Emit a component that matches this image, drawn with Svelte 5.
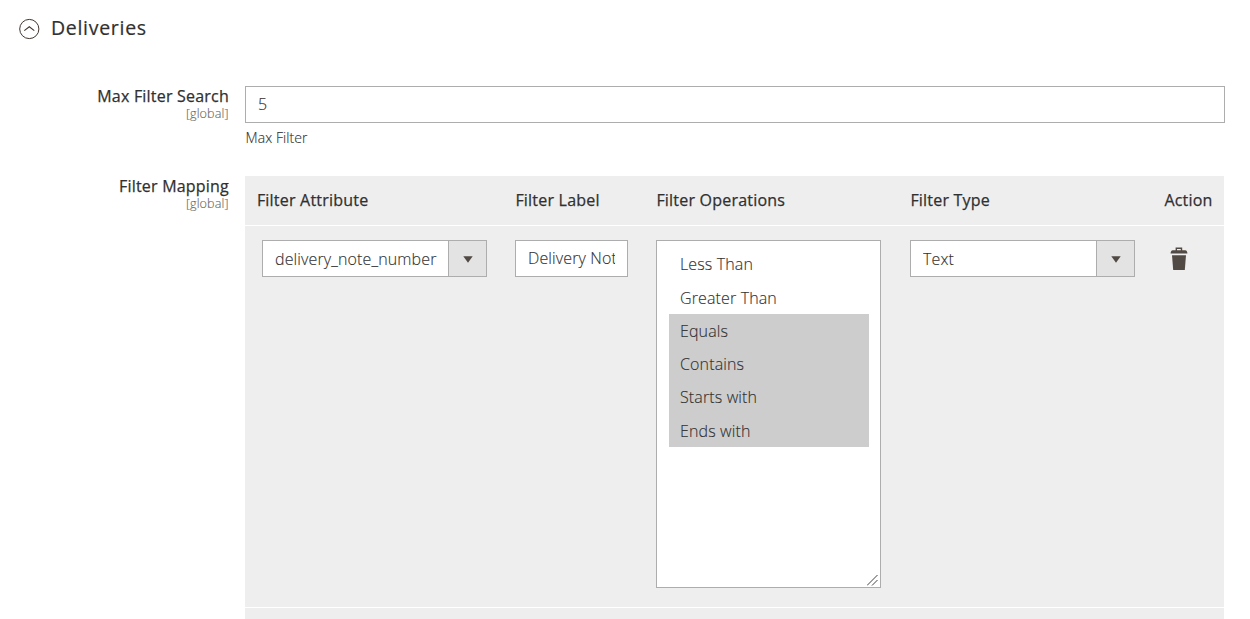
<script>
  const headers = ['Filter Attribute', 'Filter Label', 'Filter Operations', 'Filter Type', 'Action'];
  const operations = [
    { label: 'Less Than', on: false },
    { label: 'Greater Than', on: false },
    { label: 'Equals', on: true },
    { label: 'Contains', on: true },
    { label: 'Starts with', on: true },
    { label: 'Ends with', on: true }
  ];
</script>

{#snippet dropdown(value)}
  <div class="select">
    <div class="value"><span>{value}</span></div>
    <div class="arrow">
      <svg width="10" height="7" viewBox="0 0 10 7"><path d="M0.3 0.2H9.7L5 6.8Z" fill="#514943" /></svg>
    </div>
  </div>
{/snippet}

<section>
  <header>
    <svg width="22" height="22" viewBox="0 0 22 22" fill="none" stroke="#41362f">
      <circle cx="11.3" cy="11" r="9.6" stroke-width="1" />
      <path d="M6.3 12.6L11.3 8.8L16.3 12.6" stroke-width="1.1" />
    </svg>
    <h1>Deliveries</h1>
  </header>

  <div class="field first">
    <div class="label"><b>Max Filter Search</b><small>[global]</small></div>
    <div class="control">
      <div class="input wide"><span>5</span></div>
      <p>Max Filter</p>
    </div>
  </div>

  <div class="field second">
    <div class="label"><b>Filter Mapping</b><small>[global]</small></div>
    <div class="table">
      <div class="row head">
        {#each headers as title}<div>{title}</div>{/each}
      </div>
      <div class="row body">
        <div class="attr">{@render dropdown('delivery_note_number')}</div>
        <div><div class="input short"><span>Delivery Note</span></div></div>
        <div>
          <div class="multi">
            {#each operations as op}<div class="option" class:on={op.on}>{op.label}</div>{/each}
            <svg class="grip" width="11" height="11" viewBox="0 0 11 11" stroke="#444" fill="none"><path d="M0 10.5L10.5 0M5 10.5L10.5 5" /></svg>
          </div>
        </div>
        <div>{@render dropdown('Text')}</div>
        <div class="action">
          <svg width="18" height="24" viewBox="0 0 18 24" fill="#514943">
            <path fill-rule="evenodd" d="M5.6 3.2V0.6H12.2V3.2H15.2Q17.4 3.5 17.4 6.5H0.6Q0.6 3.5 2.8 3.2ZM7 2V3.2H10.8V2Z" />
            <path d="M2 8.3H16L14.8 23H3.2Z" />
          </svg>
        </div>
      </div>
      <div class="row foot"></div>
    </div>
  </div>
</section>

<style>
  :global(body) { background: #fff; overflow: hidden; }
  section {
    width: 1250px; height: 619px; overflow: hidden; box-sizing: border-box;
    font: 300 16px/22px "Open Sans", sans-serif; color: #303030;
    letter-spacing: 0.13px; -webkit-text-stroke: 0.12px currentColor;
  }
  section * { box-sizing: border-box; }
  svg { display: block; }
  header { display: flex; align-items: center; height: 56px; padding-left: 18px; gap: 11px; }
  header svg { margin-top: 2px; }
  h1 { margin: 0; font-size: 19.5px; font-weight: 400; line-height: 26px; letter-spacing: 0.7px; color: #303030; -webkit-text-stroke-width: 0.2px; }
  .field { display: grid; grid-template-columns: 229px 980px; column-gap: 16px; }
  .first { margin-top: 30px; height: 90px; }
  .label { text-align: right; }
  .label b, .head { font-weight: 400; letter-spacing: 0.21px; -webkit-text-stroke-width: 0.25px; }
  .label b { display: block; line-height: 20px; }
  .label small { display: block; padding-right: 0.5px; font-size: 12.6px; line-height: 15px; letter-spacing: 0.1px; color: #666; }
  .input { height: 37px; border: 1px solid #adadad; background: #fff; padding: 0 12px; line-height: 35px; white-space: nowrap; }
  .input span, .value span { display: block; overflow: hidden; white-space: nowrap; }
  .short { width: 113px; }
  p { margin: 5px 0 0; padding-left: 0.5px; font-size: 14px; line-height: 20px; letter-spacing: 0.08px; }
  .table { width: 979px; background: #eee; }
  .row { display: grid; grid-template-columns: 258.5px 141px 254px 254px 60px; padding-left: 11.5px; }
  .head { height: 50px; padding-left: 11.9px; border-bottom: 1px solid #fff; line-height: 48px; }
  .body { height: 382px; padding-top: 14px; border-bottom: 1px solid #fff; }
  .foot { height: 11px; }
  .attr { padding-left: 5.5px; }
  .select { display: flex; width: 225px; height: 37px; border: 1px solid #adadad; background: #fff; }
  .value { width: 185px; padding: 0 11px 0 12px; line-height: 36px; }
  .arrow { flex: 1; display: grid; place-items: center; padding: 2px 0 0 1px; border-left: 1px solid #adadad; background: #e3e3e3; }
  .multi { position: relative; width: 225px; height: 348px; padding: 6.25px 11px 0 12px; border: 1px solid #adadad; background: #fff; }
  .option { height: 33.3px; padding-left: 11px; line-height: 34px; }
  .on { background: #cdcdcd; }
  .grip { position: absolute; right: 2px; bottom: 1px; }
  .action { padding: 7px 0 0 6px; }
</style>
